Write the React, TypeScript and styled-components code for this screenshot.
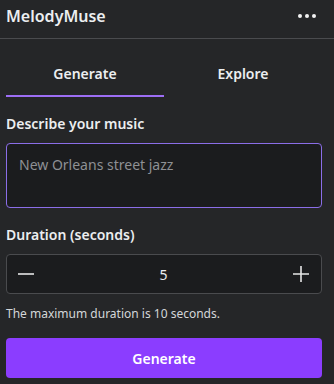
import React, { useState } from "react";
import styled, { createGlobalStyle } from "styled-components";

const Global = createGlobalStyle`
  html, body { margin: 0; padding: 0; background: #252628; }
  body { font-family: "Noto Sans", Inter, sans-serif; color: #e9eaec; }
  * { box-sizing: border-box; }
`;

const Page = styled.div`
  width: 334px;
  height: 384px;
  background: #252628;
  display: flex;
  flex-direction: column;
`;

const Header = styled.div`
  height: 39px;
  display: flex;
  align-items: center;
  justify-content: space-between;
  padding: 0 18px 6px 6px;
  border-bottom: 1px solid #4a4b4e;
`;

const Title = styled.div`
  font-size: 16px;
  font-weight: 600;
  color: #eceef0;
  letter-spacing: 0;
`;

const Dots = styled.div`
  display: flex;
  gap: 3px;
`;

const Dot = styled.span`
  width: 4px;
  height: 4px;
  border-radius: 50%;
  background: #f2f2f2;
`;

const Content = styled.div`
  padding: 0 12px 0 6px;
  display: flex;
  flex-direction: column;
`;

const Tabs = styled.div`
  display: grid;
  grid-template-columns: 1fr 1fr;
  height: 58px;
`;

const Tab = styled.button<{ $active?: boolean }>`
  background: none;
  border: none;
  border-bottom: 2px solid ${(p) => (p.$active ? "#9d6ef5" : "transparent")};
  color: #eceef0;
  font-family: inherit;
  font-size: 14px;
  font-weight: 600;
  padding: 12px 0 0;
  cursor: pointer;
`;

const Label = styled.div<{ $top: number }>`
  margin-top: ${(p) => p.$top}px;
  font-size: 14px;
  font-weight: 600;
  color: #eceef0;
  line-height: 20px;
`;

const TextArea = styled.textarea`
  margin-top: 9px;
  height: 65px;
  width: 100%;
  resize: none;
  background: #1b1c1e;
  border: 1px solid #8b6ee8;
  border-radius: 4px;
  color: #e9eaec;
  font-family: inherit;
  font-size: 14px;
  padding: 11px 12px 10px;
  outline: none;
  &::placeholder { color: #8e9094; }
`;

const Stepper = styled.div`
  margin-top: 9px;
  height: 40px;
  display: flex;
  align-items: center;
  justify-content: space-between;
  background: #1b1c1e;
  border: 1px solid #4a4b4e;
  border-radius: 4px;
  padding: 0 11px 0 10px;
`;

const StepBtn = styled.button`
  background: none;
  border: none;
  padding: 0;
  width: 18px;
  height: 18px;
  display: flex;
  align-items: center;
  justify-content: center;
  cursor: pointer;
`;

const Value = styled.div`
  font-size: 14px;
  color: #eceef0;
`;

const Helper = styled.div`
  margin-top: 12px;
  font-size: 12px;
  color: #d4d6d9;
  line-height: 16px;
`;

const Primary = styled.button`
  margin-top: 16px;
  height: 40px;
  width: 100%;
  border: none;
  border-radius: 4px;
  background: #8b3dff;
  color: #fff;
  font-family: inherit;
  font-size: 14px;
  font-weight: 600;
  cursor: pointer;
`;

export default function App() {
  const [tab, setTab] = useState(0);
  const [val, setVal] = useState(5);
  return (
    <Page>
      <Global />
      <Header>
        <Title>MelodyMuse</Title>
        <Dots>
          <Dot />
          <Dot />
          <Dot />
        </Dots>
      </Header>
      <Content>
        <Tabs>
          <Tab $active={tab === 0} onClick={() => setTab(0)}>Generate</Tab>
          <Tab $active={tab === 1} onClick={() => setTab(1)}>Explore</Tab>
        </Tabs>
        <Label $top={17}>Describe your music</Label>
        <TextArea placeholder="New Orleans street jazz" />
        <Label $top={17}>Duration (seconds)</Label>
        <Stepper>
          <StepBtn onClick={() => setVal(Math.max(1, val - 1))}>
            <svg width="18" height="18" viewBox="0 0 18 18">
              <path d="M1 9h16" stroke="#e6e6e6" strokeWidth="1.6" />
            </svg>
          </StepBtn>
          <Value>{val}</Value>
          <StepBtn onClick={() => setVal(Math.min(10, val + 1))}>
            <svg width="18" height="18" viewBox="0 0 18 18">
              <path d="M1 9h16M9 1v16" stroke="#e6e6e6" strokeWidth="1.6" />
            </svg>
          </StepBtn>
        </Stepper>
        <Helper>The maximum duration is 10 seconds.</Helper>
        <Primary>Generate</Primary>
      </Content>
    </Page>
  );
}
